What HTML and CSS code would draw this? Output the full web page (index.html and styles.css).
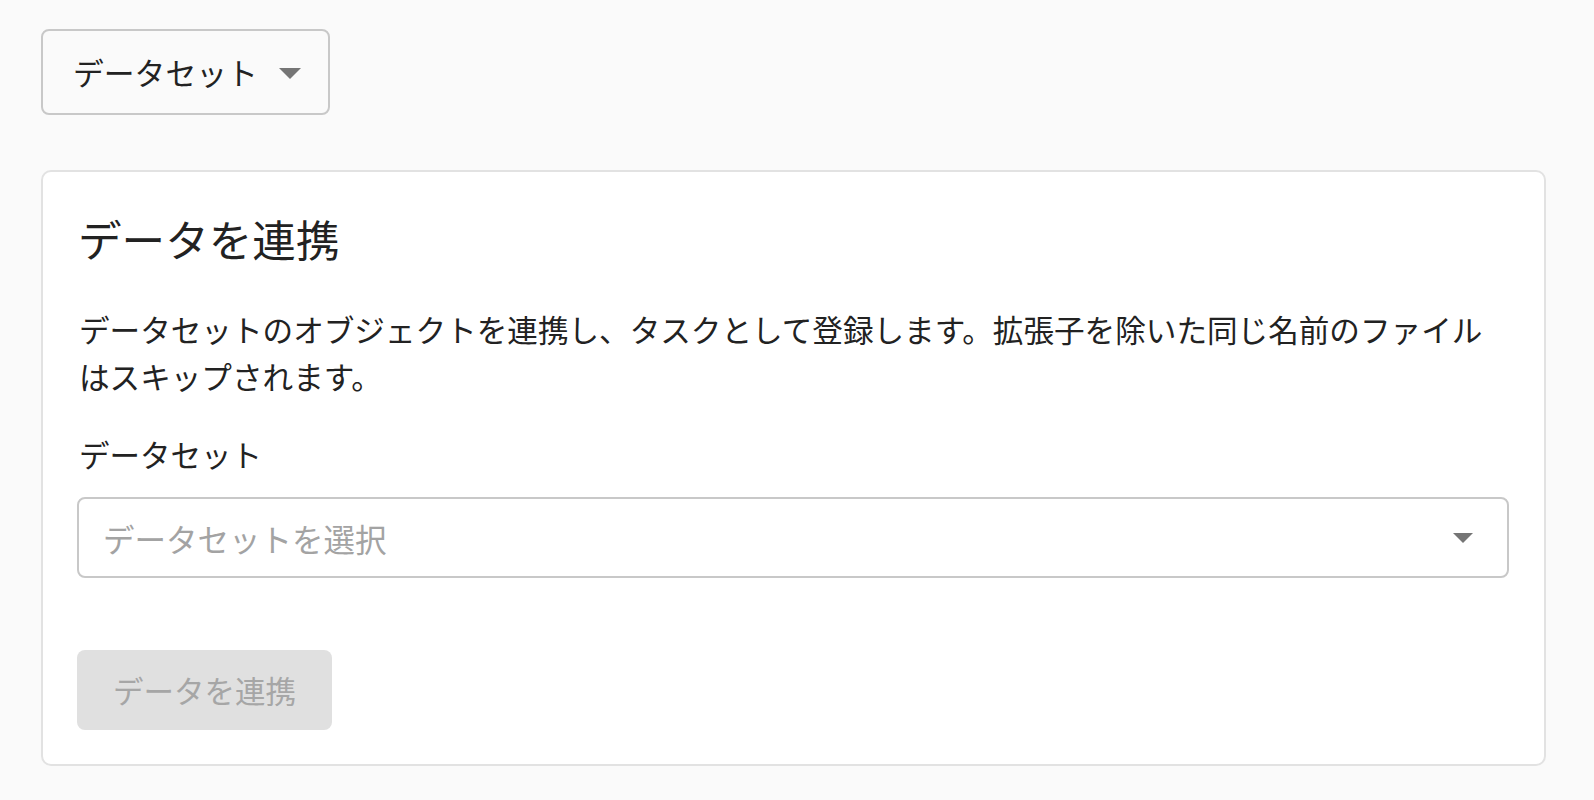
FILE: index.html
```html
<!DOCTYPE html>
<html lang="ja">
<head>
<meta charset="utf-8">
<title>データを連携</title>
<link rel="stylesheet" href="styles.css">
</head>
<body>
<div class="page">
  <div class="toolbar">
    <button class="menu-btn" type="button">
      <span class="menu-label">データセット</span>
      <span class="caret"></span>
    </button>
  </div>
  <section class="card">
    <h1 class="card-title">データを連携</h1>
    <p class="card-desc">データセットのオブジェクトを連携し、タスクとして登録します。拡張子を除いた同じ名前のファイルはスキップされます。</p>
    <div class="field">
      <label class="field-label">データセット</label>
      <div class="select">
        <span class="select-placeholder">データセットを選択</span>
        <span class="caret"></span>
      </div>
    </div>
    <button class="submit-btn" type="button" disabled>データを連携</button>
  </section>
</div>
</body>
</html>
```
FILE: styles.css
```css
* { box-sizing: border-box; }
html, body {
  margin: 0;
  background: #fafafa;
}
body {
  font-family: "Noto Sans CJK JP", "Noto Sans", sans-serif;
  color: #222222;
}
.page {
  padding: 29px 48px 34px 41px;
}
.toolbar {
  display: flex;
}
.menu-btn {
  display: flex;
  align-items: center;
  width: 289px;
  height: 86px;
  padding: 0 27px 0 30px;
  border: 2px solid #c8c8c8;
  border-radius: 8px;
  background: #fafafa;
  font-family: inherit;
  font-size: 30.8px;
  color: #222222;
  cursor: pointer;
}
.menu-label {
  line-height: 1;
}
.caret {
  display: block;
  width: 0;
  height: 0;
  border-left: 11px solid transparent;
  border-right: 11px solid transparent;
  border-top: 11px solid #757575;
}
.menu-btn .caret {
  margin-left: auto;
  margin-top: 2px;
}
.card {
  margin-top: 55px;
  background: #ffffff;
  border: 2px solid #e2e2e2;
  border-radius: 10px;
  padding: 38px 35px 34px 34px;
}
.card-title {
  margin: 0 0 0 1px;
  font-size: 43.6px;
  font-weight: 400;
  line-height: 56px;
  color: #222222;
}
.card-desc {
  margin: 40px 14px 0 2px;
  font-size: 30.6px;
  line-height: 47px;
}
.field {
  margin-top: 31px;
}
.field-label {
  display: block;
  margin-left: 2px;
  font-size: 30.5px;
  line-height: 47px;
}
.select {
  margin-top: 19px;
  height: 81px;
  border: 2px solid #c8c8c8;
  border-radius: 8px;
  display: flex;
  align-items: center;
  padding: 0 34px 0 24px;
}
.select-placeholder {
  font-size: 31.5px;
  color: #a3a3a3;
}
.select .caret {
  margin-left: auto;
  border-left-width: 10.5px;
  border-right-width: 10.5px;
  border-top-width: 10px;
}
.submit-btn {
  display: block;
  margin-top: 72px;
  width: 255px;
  height: 80px;
  border: none;
  border-radius: 8px;
  background: #e0e0e0;
  color: #a6a6a6;
  font-family: inherit;
  font-size: 30.5px;
  padding: 0;
}
```
